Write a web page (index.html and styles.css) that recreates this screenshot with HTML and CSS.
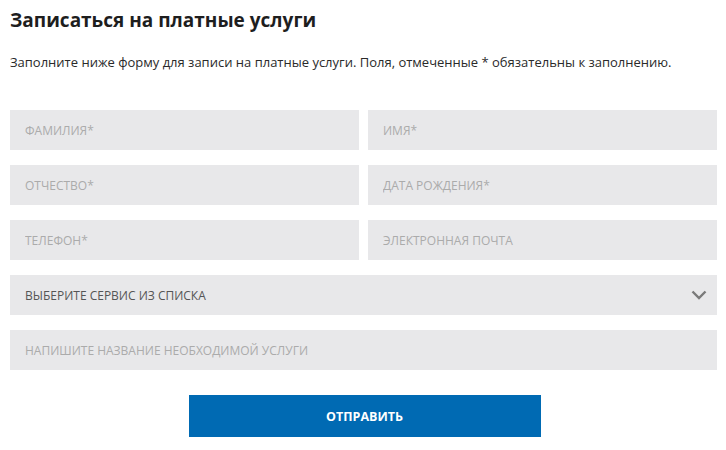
FILE: index.html
```html
<!DOCTYPE html>
<html lang="ru">
<head>
<meta charset="utf-8">
<link rel="stylesheet" href="styles.css">
</head>
<body>
<div class="page">
  <h1 class="title">Записаться на платные услуги</h1>
  <p class="lead">Заполните ниже форму для записи на платные услуги. Поля, отмеченные * обязательны к заполнению.</p>
  <form class="form">
    <div class="grid">
      <input class="field" type="text" placeholder="ФАМИЛИЯ*">
      <input class="field" type="text" placeholder="ИМЯ*">
      <input class="field" type="text" placeholder="ОТЧЕСТВО*">
      <input class="field" type="text" placeholder="ДАТА РОЖДЕНИЯ*">
      <input class="field" type="text" placeholder="ТЕЛЕФОН*">
      <input class="field" type="text" placeholder="ЭЛЕКТРОННАЯ ПОЧТА">
    </div>
    <div class="select">
      <span class="select-text">ВЫБЕРИТЕ СЕРВИС ИЗ СПИСКА</span>
      <svg class="chevron" width="16" height="10" viewBox="0 0 16 10"><path d="M1.5 1.5 L8 8 L14.5 1.5" fill="none" stroke="#7a7a7a" stroke-width="2.4"/></svg>
    </div>
    <input class="field wide" type="text" placeholder="НАПИШИТЕ НАЗВАНИЕ НЕОБХОДИМОЙ УСЛУГИ">
    <div class="actions">
      <button class="submit" type="button">ОТПРАВИТЬ</button>
    </div>
  </form>
</div>
</body>
</html>
```

FILE: styles.css
```css
* { box-sizing: border-box; }
html, body { margin: 0; padding: 0; background: #fff; }
body { font-family: "Open Sans", "Noto Sans", sans-serif; color: #222; }
.page { padding: 0 9px 0 10px; }
.title {
  margin: 0;
  padding-top: 8px;
  font-size: 19px;
  line-height: 24px;
  font-weight: 700;
  color: #1e1e1e;
}
.lead {
  margin: 0;
  padding-top: 21px;
  font-size: 13px;
  line-height: 18px;
  color: #2a2a2a;
}
.form {
  display: flex;
  flex-direction: column;
  gap: 15px;
  padding-top: 39px;
}
.grid {
  display: grid;
  grid-template-columns: 1fr 1fr;
  column-gap: 9px;
  row-gap: 15px;
}
.field {
  display: block;
  width: 100%;
  height: 40px;
  border: 0;
  margin: 0;
  padding: 0 15px;
  background: #e8e8ea;
  font-family: "Open Sans", "Noto Sans", sans-serif;
  font-size: 12px;
  color: #555;
  outline: none;
}
.field::placeholder { color: #ababab; opacity: 1; }
.select {
  display: flex;
  align-items: center;
  justify-content: space-between;
  height: 40px;
  padding: 0 10px 0 15px;
  background: #e8e8ea;
}
.select-text { font-size: 12px; color: #555; }
.chevron { display: block; }
.actions {
  display: flex;
  justify-content: center;
  padding-top: 10px;
}
.submit {
  width: 352px;
  height: 42px;
  margin-left: 2px;
  border: 0;
  background: #006ab3;
  color: #fff;
  font-family: "Open Sans", "Noto Sans", sans-serif;
  font-weight: 700;
  font-size: 12.5px;
  cursor: pointer;
}
```
